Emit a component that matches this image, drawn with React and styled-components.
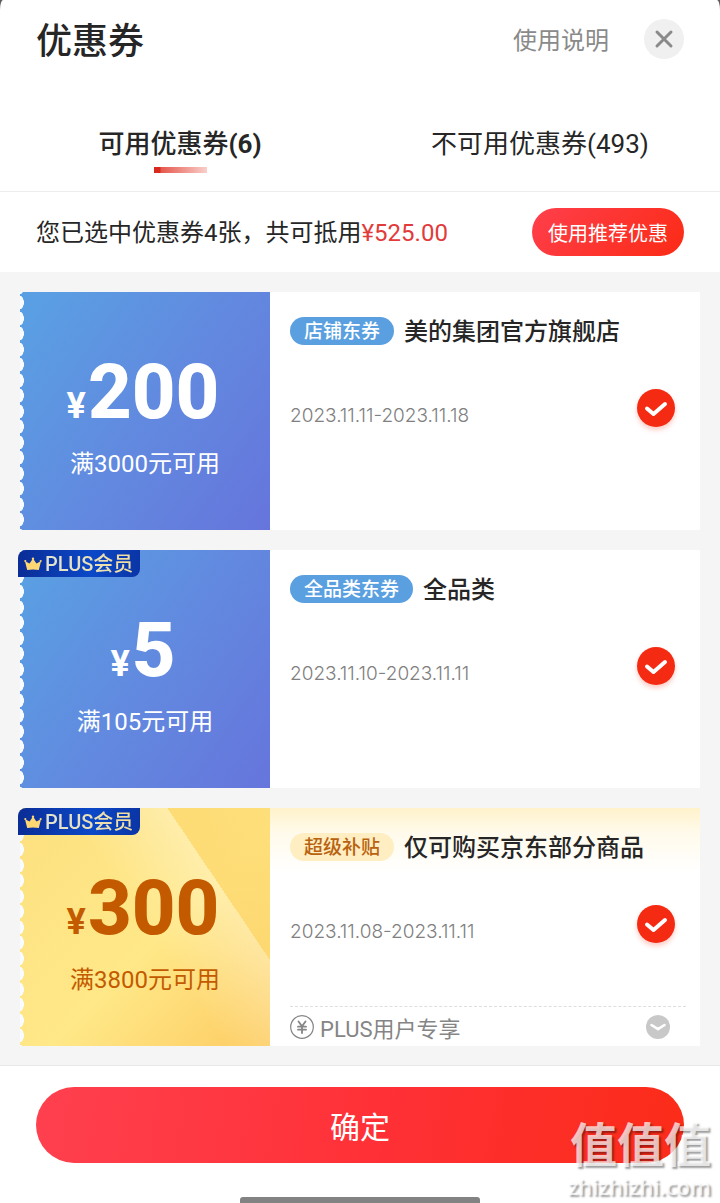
import React, { useState } from 'react';
import styled, { createGlobalStyle, css } from 'styled-components';

const GlobalStyle = createGlobalStyle`
  * {
    box-sizing: border-box;
  }
  body {
    margin: 0;
    background: #5c5c5c;
    font-family: Roboto, 'Noto Sans CJK SC', sans-serif;
    color: #262626;
  }
  button {
    margin: 0;
    padding: 0;
    border: none;
    background: none;
    font-family: inherit;
    color: inherit;
    cursor: pointer;
  }
`;

const Sheet = styled.main`
  position: relative;
  display: flex;
  flex-direction: column;
  min-height: 100vh;
  overflow: hidden;
  background: #fff;
  border-radius: 3px 3px 0 0 / 10px 10px 0 0;
`;

const Header = styled.header`
  display: flex;
  align-items: center;
  height: 78px;
  padding: 0 36px;
`;

const Title = styled.h1`
  flex: 1;
  margin: 0;
  padding-top: 6px;
  font-size: 36px;
  font-weight: 500;
  line-height: 48px;
`;

const HelpLink = styled.a`
  margin-right: 35px;
  padding-top: 4px;
  font-size: 24px;
  line-height: 32px;
  color: #8a8a8a;
  text-decoration: none;
`;

const CloseBtn = styled.button`
  display: flex;
  align-items: center;
  justify-content: center;
  width: 40px;
  height: 40px;
  border-radius: 50%;
  background: #f0f0f0;
`;

const Tabs = styled.div`
  display: flex;
  align-items: flex-start;
  padding: 47px 0 18px;
  border-bottom: 1px solid #ececec;
`;

const Tab = styled.button`
  flex: 1;
  display: flex;
  flex-direction: column;
  align-items: center;
  gap: 4px;
  font-size: 26px;
  line-height: 38px;
  font-weight: ${props => (props.$active ? 500 : 400)};

  &::after {
    content: '';
    width: 53px;
    height: 6px;
    ${props => props.$active && css`
      background: linear-gradient(90deg, #d9291c 0 6px, #e5584e 7px, #f9cfca);
    `}
  }
`;

const Count = styled.span`
  font-weight: ${props => (props.$active ? 700 : 400)};
`;

const Summary = styled.div`
  display: flex;
  align-items: center;
  justify-content: space-between;
  height: 80px;
  padding: 0 36px;
`;

const SummaryText = styled.p`
  margin: 0;
  padding-top: 2px;
  font-size: 24px;
  line-height: 32px;
`;

const Price = styled.span`
  color: #e23b3b;
`;

const RecommendBtn = styled.button`
  height: 48px;
  padding: 0 16px;
  border-radius: 24px;
  background: linear-gradient(135deg, #ff3f4c, #fb2a14);
  color: #fff;
  font-size: 20px;
`;

const List = styled.ul`
  flex: 1;
  display: flex;
  flex-direction: column;
  gap: 20px;
  margin: 0;
  padding: 20px 20px 19px;
  background: #f5f5f6;
  list-style: none;
`;

const Card = styled.li`
  position: relative;
  display: flex;
  min-height: 238px;
  background: #fff;
`;

// left edge is cut by a column of white half ellipses
const Ticket = styled.div`
  display: flex;
  flex-direction: column;
  align-items: center;
  width: 250px;
  padding-top: 62px;
  color: ${props => (props.$gold ? '#c45a00' : '#fff')};
  background:
    radial-gradient(ellipse 4px 7px at 0 50%, #f8fcff 90%, transparent) 0 -5px / 4px 31px repeat-y,
    radial-gradient(ellipse 4px 7px at 0 50%, #f8fcff 90%, transparent) 0 11px / 4px 31px repeat-y,
    ${props => (props.$gold
      ? `linear-gradient(56deg, transparent 75%, rgba(253, 216, 112, 0.75) 75%, rgba(253, 222, 120, 0.9)),
         linear-gradient(56deg, transparent 50%, rgba(255, 246, 214, 0.45) 75%, transparent 75%),
         linear-gradient(135deg, #fde080 0%, #ffe888 55%, #fdcb62 100%)`
      : 'linear-gradient(125deg, #5a9fe3 5%, #6288df 55%, #6675dc 100%)')};
`;

const Amount = styled.div`
  display: flex;
  align-items: baseline;
  gap: 2px;
  padding-right: 4px;
  font-weight: 800;
  font-size: 76px;
  line-height: 76px;
`;

const Yen = styled.span`
  font-size: 36px;
  line-height: 36px;
  font-weight: 700;
`;

const Condition = styled.div`
  margin-top: 18px;
  font-size: 24px;
  line-height: 32px;
`;

const PlusBadge = styled.div`
  position: absolute;
  top: 0;
  left: -2px;
  display: flex;
  align-items: center;
  gap: 3px;
  height: 27px;
  padding: 0 7px 0 6px;
  border-radius: 8px 0 8px 0;
  background: linear-gradient(90deg, #0b2d96, #0b48c8 60%, #0a35a6);
`;

const PlusText = styled.span`
  padding-top: 1px;
  font-size: 20px;
  line-height: 26px;
  font-weight: 500;
  color: transparent;
  background: linear-gradient(90deg, #e2e3d2, #f3dd9d);
  background-clip: text;
`;

const Info = styled.div`
  flex: 1;
  display: flex;
  flex-direction: column;
  padding: 22px 14px 0 20px;
  ${props => props.$gold && css`
    background: linear-gradient(180deg, #fff2cb, #fffaea 24px, #fff 64px);
  `}
`;

const TitleRow = styled.div`
  display: flex;
  align-items: center;
  gap: 10px;
`;

const Tag = styled.span`
  padding: 1px 14px 0;
  border-radius: 14px;
  font-size: 19px;
  line-height: 27px;
  font-weight: 500;
  color: ${props => (props.$gold ? '#b8620f' : '#fff')};
  background: ${props => (props.$gold ? '#ffeec2' : '#5a9fe0')};
`;

const ShopName = styled.h2`
  margin: 0;
  padding-top: 2px;
  font-size: 24px;
  line-height: 32px;
  font-weight: 500;
`;

const DateRow = styled.div`
  display: flex;
  align-items: center;
  justify-content: space-between;
  height: 56px;
  margin-top: 32px;
  padding-right: 11px;
`;

const DateText = styled.span`
  padding-top: 16px;
  font-family: Inter, Roboto, sans-serif;
  font-size: 19px;
  line-height: 24px;
  font-weight: 300;
  color: #808080;
`;

const CheckLabel = styled.label`
  display: grid;
  width: 38px;
  height: 38px;
  border-radius: 50%;
  background: ${props => (props.$checked ? '#f42a12' : '#d5d5d5')};
  box-shadow: 0 3px 5px rgba(244, 42, 18, 0.25);
  cursor: pointer;

  > * {
    grid-area: 1 / 1;
    width: 38px;
    height: 38px;
    margin: 0;
  }
  input {
    appearance: none;
  }
  svg {
    pointer-events: none;
  }
`;

const Extra = styled.button`
  display: flex;
  align-items: center;
  gap: 6px;
  height: 40px;
  margin-top: auto;
  padding-right: 16px;
  border-top: 1px dashed #dedede;
  font-size: 22px;
  color: #858585;
  text-align: left;
`;

const ExtraText = styled.span`
  flex: 1;
`;

const Footer = styled.footer`
  display: flex;
  flex-direction: column;
  align-items: center;
  gap: 34px;
  padding: 21px 36px 0;
  border-top: 1px solid #e8e8e8;
`;

const ConfirmBtn = styled.button`
  width: 100%;
  height: 76px;
  border-radius: 38px;
  background: linear-gradient(100deg, #ff404f, #ff3035 55%, #fb2c18);
  color: #fff;
  font-size: 30px;
`;

const HomeBar = styled.div`
  width: 240px;
  height: 6px;
  border-radius: 3px 3px 0 0;
  background: #828282;
`;

const Watermark = styled.div`
  position: absolute;
  right: 9px;
  bottom: 6px;
  display: flex;
  flex-direction: column;
  align-items: flex-end;
  gap: 3px;
  color: rgba(255, 255, 255, 0.72);
  text-shadow: 2px 2px 2px rgba(0, 0, 0, 0.38);
  pointer-events: none;
`;

const WatermarkName = styled.div`
  font-size: 47px;
  line-height: 52px;
  font-weight: 700;
`;

const WatermarkSite = styled.div`
  font-family: 'Open Sans', sans-serif;
  font-size: 22px;
  line-height: 22px;
  font-weight: 600;
`;

const CloseIcon = () => (
  <svg width="40" height="40" viewBox="0 0 40 40" fill="none" stroke="#8a8a8a" strokeWidth="3" strokeLinecap="round">
    <path d="M13 13 27 27M27 13 13 27" />
  </svg>
);

const CheckIcon = () => (
  <svg viewBox="0 0 38 38" fill="none" stroke="#fff" strokeWidth="4" strokeLinecap="round" strokeLinejoin="round">
    <path d="M10 19.5 16.5 25 28 15" />
  </svg>
);

const CrownIcon = () => (
  <svg width="18" height="14" viewBox="0 0 18 14" fill="#ffd873">
    <path d="M3.2 13 1 4.2 5.6 6.4 9 1.4 12.4 6.4 17 4.2 14.8 13Q9 11.8 3.2 13Z" />
    <circle cx="1.3" cy="4" r="1.1" />
    <circle cx="9" cy="1.8" r="1.2" />
    <circle cx="16.7" cy="4" r="1.1" />
  </svg>
);

const YenIcon = () => (
  <svg width="24" height="24" viewBox="0 0 24 24" fill="none" stroke="#858585" strokeLinecap="round">
    <circle cx="12" cy="12" r="11.3" strokeWidth="1.2" />
    <path d="M8.5 6.5 12 11.3 15.5 6.5M12 11.3V18M8 11.7H16M8 14.7H16" strokeWidth="1.8" />
  </svg>
);

const ExpandIcon = () => (
  <svg width="24" height="24" viewBox="0 0 24 24" fill="none">
    <circle cx="12" cy="12" r="12" fill="#c8c8c8" />
    <path d="M5.5 10 12 14.2 18.5 10" stroke="#fff" strokeWidth="2.6" strokeLinecap="round" strokeLinejoin="round" />
  </svg>
);

const coupons = [
  { id: 1, amount: '200', condition: '满3000元可用', tag: '店铺东券', name: '美的集团官方旗舰店', date: '2023.11.11-2023.11.18' },
  { id: 2, amount: '5', condition: '满105元可用', tag: '全品类东券', name: '全品类', date: '2023.11.10-2023.11.11', plus: true },
  { id: 3, amount: '300', condition: '满3800元可用', tag: '超级补贴', name: '仅可购买京东部分商品', date: '2023.11.08-2023.11.11', plus: true, gold: true, extra: 'PLUS用户专享' },
];

function Coupon({ coupon }) {
  const [checked, setChecked] = useState(true);
  const { amount, condition, tag, name, date, plus, gold, extra } = coupon;

  return (
    <Card>
      <Ticket $gold={gold}>
        <Amount><Yen>¥</Yen>{amount}</Amount>
        <Condition>{condition}</Condition>
      </Ticket>
      <Info $gold={gold}>
        <TitleRow>
          <Tag $gold={gold}>{tag}</Tag>
          <ShopName>{name}</ShopName>
        </TitleRow>
        <DateRow>
          <DateText>{date}</DateText>
          <CheckLabel $checked={checked}>
            <input
              type="checkbox"
              aria-label={name}
              checked={checked}
              onChange={() => setChecked(!checked)}
            />
            <CheckIcon />
          </CheckLabel>
        </DateRow>
        {extra && (
          <Extra type="button">
            <YenIcon />
            <ExtraText>{extra}</ExtraText>
            <ExpandIcon />
          </Extra>
        )}
      </Info>
      {plus && (
        <PlusBadge>
          <CrownIcon />
          <PlusText>PLUS会员</PlusText>
        </PlusBadge>
      )}
    </Card>
  );
}

function App() {
  const [tab, setTab] = useState(0);

  return (
    <>
      <GlobalStyle />
      <Sheet>
        <Header>
          <Title>优惠券</Title>
          <HelpLink href="#help">使用说明</HelpLink>
          <CloseBtn type="button" aria-label="关闭"><CloseIcon /></CloseBtn>
        </Header>
        <Tabs role="tablist">
          <Tab type="button" role="tab" aria-selected={tab === 0} $active={tab === 0} onClick={() => setTab(0)}>
            <span>可用优惠券<Count $active={tab === 0}>(6)</Count></span>
          </Tab>
          <Tab type="button" role="tab" aria-selected={tab === 1} $active={tab === 1} onClick={() => setTab(1)}>
            <span>不可用优惠券<Count $active={tab === 1}>(493)</Count></span>
          </Tab>
        </Tabs>
        <Summary>
          <SummaryText>您已选中优惠券4张，共可抵用<Price>¥525.00</Price></SummaryText>
          <RecommendBtn type="button">使用推荐优惠</RecommendBtn>
        </Summary>
        <List>
          {coupons.map(coupon => <Coupon key={coupon.id} coupon={coupon} />)}
        </List>
        <Footer>
          <ConfirmBtn type="button">确定</ConfirmBtn>
          <HomeBar />
        </Footer>
        <Watermark>
          <WatermarkName>值值值</WatermarkName>
          <WatermarkSite>zhizhizhi.com</WatermarkSite>
        </Watermark>
      </Sheet>
    </>
  );
}

export default App;
